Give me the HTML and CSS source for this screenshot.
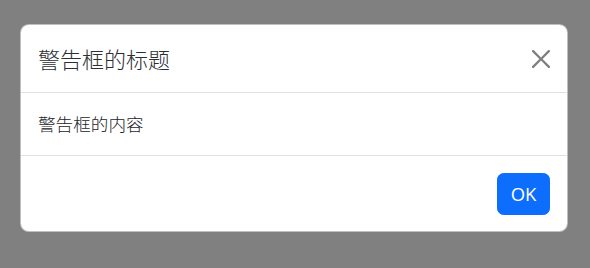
FILE: index.html
```html
<!DOCTYPE html>
<html lang="zh-CN">
<head>
<meta charset="utf-8">
<title>警告框</title>
<link rel="stylesheet" href="styles.css">
</head>
<body>
<div class="backdrop">
  <div class="modal">
    <div class="modal-header">
      <h5 class="modal-title">警告框的标题</h5>
      <button class="btn-close" type="button" aria-label="Close">
        <svg viewBox="0 0 16 16" width="18" height="18" aria-hidden="true"><path d="M.293.293a1 1 0 0 1 1.414 0L8 6.586 14.293.293a1 1 0 1 1 1.414 1.414L9.414 8l6.293 6.293a1 1 0 0 1-1.414 1.414L8 9.414l-6.293 6.293a1 1 0 0 1-1.414-1.414L6.586 8 .293 1.707a1 1 0 0 1 0-1.414z"/></svg>
      </button>
    </div>
    <div class="modal-body">警告框的内容</div>
    <div class="modal-footer">
      <button class="btn-primary" type="button">OK</button>
    </div>
  </div>
</div>
</body>
</html>
```
FILE: styles.css
```css
html, body {
  margin: 0;
  padding: 0;
  height: 100%;
}
body {
  background: #808080;
  font-family: "Noto Sans CJK SC", "Noto Sans", sans-serif;
  color: #212529;
}
.backdrop {
  padding: 24px 0 0 20px;
}
.modal {
  box-sizing: border-box;
  width: 548px;
  background: #fff;
  border: 1px solid rgba(0, 0, 0, 0.25);
  border-radius: 8.8px;
  display: flex;
  flex-direction: column;
}
.modal-header {
  display: flex;
  align-items: center;
  justify-content: space-between;
  padding: 17px 17px 17px 17px;
  border-bottom: 1px solid #dee2e6;
}
.modal-title {
  margin: 0;
  font-size: 22px;
  line-height: 33px;
  font-weight: 300;
  color: #2b2f33;
}
.btn-close {
  width: 26px;
  height: 26px;
  padding: 0;
  margin-right: -4px;
  border: 0;
  background: transparent;
  display: flex;
  align-items: center;
  justify-content: center;
  opacity: 0.5;
}
.btn-close svg {
  display: block;
  fill: #000;
}
.modal-body {
  padding: 18px 17px;
  font-size: 17.6px;
  line-height: 26px;
  font-weight: 300;
  color: #212529;
  border-bottom: 1px solid #dee2e6;
}
.modal-footer {
  display: flex;
  justify-content: flex-end;
  padding: 17px 17px 16px 17px;
}
.btn-primary {
  box-sizing: border-box;
  width: 53px;
  height: 42px;
  padding: 0;
  border: 1px solid #0d6efd;
  border-radius: 6.6px;
  background: #0d6efd;
  color: #fff;
  font-family: "Open Sans", "Noto Sans", sans-serif;
  font-size: 18.5px;
  line-height: 26px;
}
```
